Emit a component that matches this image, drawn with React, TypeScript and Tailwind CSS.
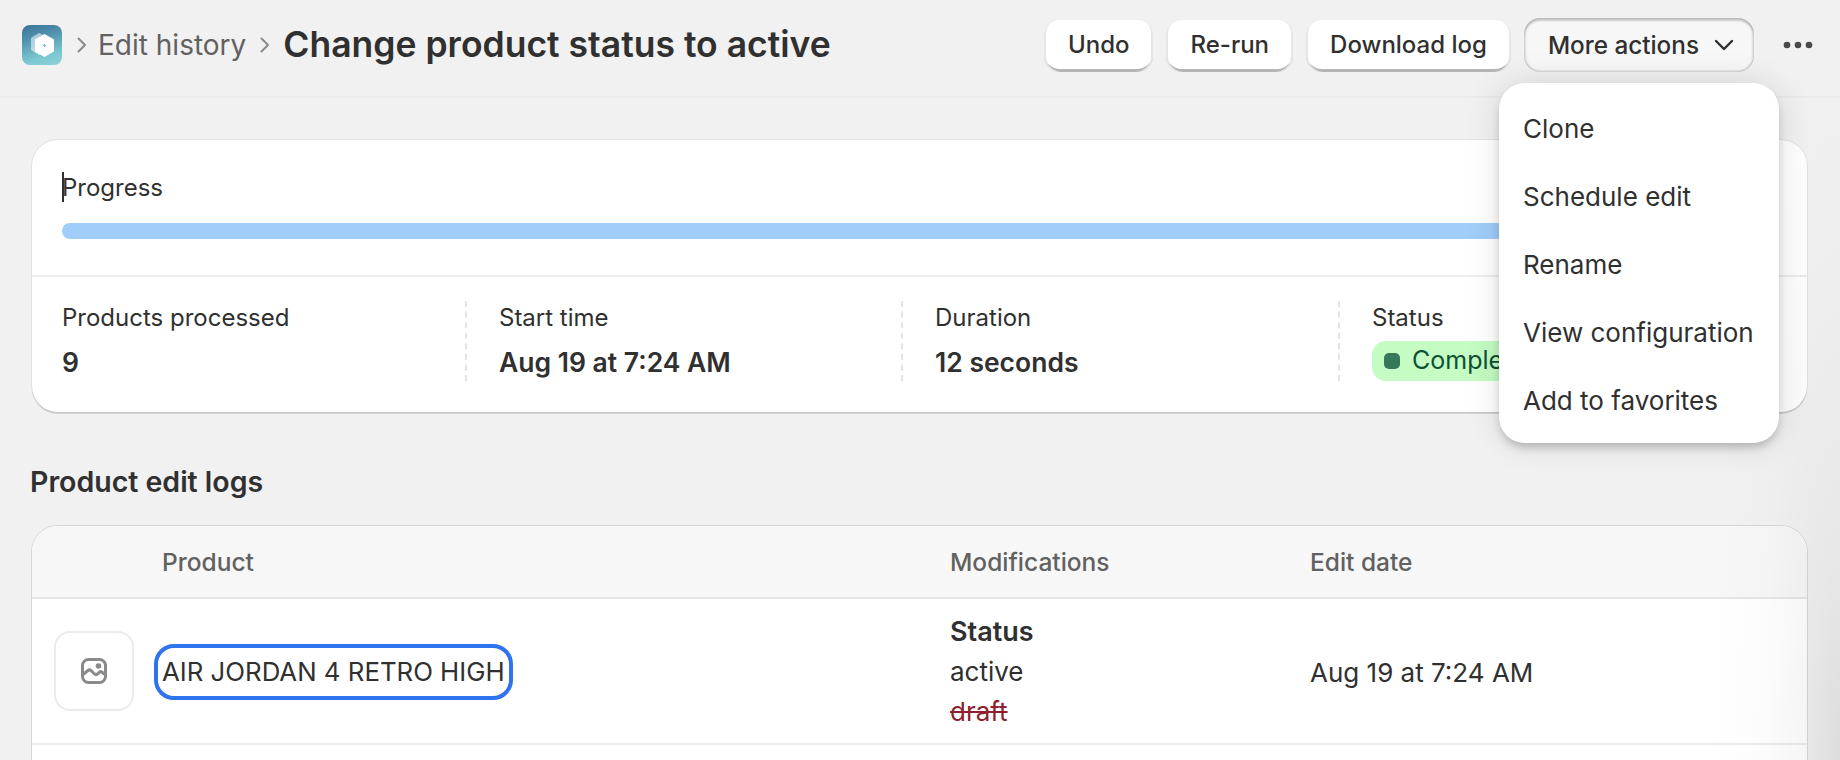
import React from "react";

function Chevron() {
  return (
    <svg width="10" height="16" viewBox="0 0 10 16" fill="none" className="shrink-0">
      <path d="M1.5 1.5 8 8l-6.500 6.500" stroke="#8a8a8a" strokeWidth="2" strokeLinecap="round" strokeLinejoin="round" />
    </svg>
  );
}

function Logo() {
  return (
    <div className="w-[40px] h-[40px] rounded-[8px] shrink-0 bg-[linear-gradient(165deg,#3b7398_0%,#4f8fab_30%,#7cc8d2_75%,#8fd2d6_100%)] flex items-center justify-center">
      <svg width="40" height="40" viewBox="0 0 40 40">
        <path d="M17 8l8 4v16l-8 2-8-5V13z" fill="#ffffff" fillOpacity="0.55" />
        <path d="M22.500 9l9.500 5.500v12L22.500 32 13 26.500v-12z" fill="#ffffff" />
        <path d="M22.500 19v3M21 20.500h3" stroke="#6fc0cc" strokeWidth="1" />
      </svg>
    </div>
  );
}

function ImageIcon() {
  return (
    <svg width="28" height="28" viewBox="0 0 28 28" fill="none">
      <rect x="2.500" y="2.500" width="23" height="23" rx="6" stroke="#8a8a8a" strokeWidth="3" />
      <circle cx="18.500" cy="9" r="2.800" fill="#8a8a8a" />
      <path d="M3 17.500 8 13.500c1-.8 2-.8 3 0l3.500 3.500c1 .9 1.900.9 2.800.1l2-1.800c.9-.8 1.900-.8 2.800 0L25 17.500" stroke="#8a8a8a" strokeWidth="3" />
    </svg>
  );
}

function Btn({ label }: { label: string }) {
  return (
    <button className="h-[54px] px-[24px] rounded-[16px] bg-white text-[24px] leading-[40px] font-[550] text-[#303030] shadow-[inset_0_2px_0_#f0f0f0,inset_2px_0_0_#e6e6e6,inset_-2px_0_0_#e6e6e6,inset_0_-3px_0_#b5b5b5]">
      {label}
    </button>
  );
}

function Stat({ label, value }: { label: string; value: string }) {
  return (
    <div className="border-l-2 border-dashed border-[#e3e3e3] pl-[32px] h-[80px]">
      <div className="text-[24px] leading-[34px] text-[#303030]">{label}</div>
      <div className="text-[26.500px] leading-[40px] mt-[7px] font-semibold text-[#303030]">{value}</div>
    </div>
  );
}

export default function App() {
  const menu = ["Clone", "Schedule edit", "Rename", "View configuration", "Add to favorites"];
  return (
    <div className="relative w-[1840px] h-[760px] overflow-hidden bg-[#f1f1f1] font-['Inter',sans-serif] text-[#303030]">
      <header className="h-[98px] border-b-2 border-[#ebebeb] flex items-center pl-[22px] pr-[27px] pb-[6px]">
        <Logo />
        <div className="ml-[15px]"><Chevron /></div>
        <span className="ml-[11px] text-[28px] leading-[40px] text-[#616161]">Edit history</span>
        <div className="ml-[14px]"><Chevron /></div>
        <h1 className="ml-[13px] text-[35.500px] leading-[44px] font-semibold text-[#303030]">Change product status to active</h1>
        <div className="ml-auto flex items-center gap-[13px]">
          <Btn label="Undo" />
          <Btn label="Re-run" />
          <Btn label="Download log" />
          <button className="h-[54px] pl-[24px] pr-[20px] flex items-center gap-[15px] rounded-[16px] bg-[#f7f7f7] text-[24.300px] leading-[40px] font-[550] text-[#303030] shadow-[inset_0_3px_2px_rgba(26,26,26,0.2),inset_2px_0_2px_rgba(26,26,26,0.12),inset_-2px_0_2px_rgba(26,26,26,0.12),inset_0_-2px_0_#e6e6e6]">
            More actions
            <svg width="20" height="12" viewBox="0 0 20 12" fill="none">
              <path d="M2 2l8 8 8-8" stroke="#303030" strokeWidth="2.400" strokeLinecap="round" strokeLinejoin="round" />
            </svg>
          </button>
          <svg className="ml-[16px]" width="30" height="8" viewBox="0 0 30 8">
            <circle cx="4" cy="4" r="3.300" fill="#4a4a4a" />
            <circle cx="15" cy="4" r="3.300" fill="#4a4a4a" />
            <circle cx="26" cy="4" r="3.300" fill="#4a4a4a" />
          </svg>
        </div>
      </header>

      <main className="pl-[32px] pr-[33px] pt-[42px]">
        <section className="rounded-[26px] bg-white h-[272px] shadow-[0_0_0_1px_rgba(0,0,0,0.06),0_2px_0_rgba(26,26,26,0.14)]">
          <div className="px-[30px] pt-[28px] pb-[36px] border-b-2 border-[#ebebeb]">
            <div className="relative text-[24px] leading-[40px] text-[#303030]">
              Progress
              <span className="absolute left-0 top-[4px] w-[2px] h-[30px] bg-[#303030]" />
            </div>
            <div className="mt-[15px] h-[16px] rounded-full bg-[#a0cdf9]" />
          </div>
          <div className="pl-[30px] pr-[30px] pt-[24px] grid grid-cols-[403px_436px_437px_1fr]">
            <div className="h-[80px]">
              <div className="text-[24px] leading-[34px] text-[#303030]">Products processed</div>
              <div className="text-[26.500px] leading-[40px] mt-[7px] font-semibold text-[#303030]">9</div>
            </div>
            <Stat label="Start time" value="Aug 19 at 7:24 AM" />
            <Stat label="Duration" value="12 seconds" />
            <div className="border-l-2 border-dashed border-[#e3e3e3] pl-[32px] h-[80px]">
              <div className="text-[24px] leading-[34px] text-[#303030]">Status</div>
              <div className="mt-[6px] inline-flex h-[40px] items-center rounded-[14px] bg-[#c4fcc4] pl-[12px] pr-[16px] gap-[12px] text-[25px] text-[#0c5132]">
                <span className="w-[16px] h-[16px] rounded-[5px] bg-[#36785a]" />
                Completed
              </div>
            </div>
          </div>
        </section>

        <h2 className="mt-[50px] -ml-[2px] text-[28.500px] leading-[40px] font-semibold text-[#303030]">Product edit logs</h2>

        <section className="mt-[24px] rounded-t-[26px] bg-white h-[300px] shadow-[0_0_0_1px_rgba(0,0,0,0.1)] overflow-hidden">
          <div className="h-[73px] pt-[2px] bg-[#f7f7f7] border-b-2 border-[#e6e6e6] grid grid-cols-[130px_788px_360px_1fr] items-center text-[24.500px] font-[500] text-[#616161]">
            <div />
            <div>Product</div>
            <div>Modifications</div>
            <div>Edit date</div>
          </div>
          <div className="h-[146px] pt-[2px] border-b-2 border-[#ebebeb] grid grid-cols-[130px_788px_360px_1fr] items-center text-[26px] text-[#303030]">
            <div className="pl-[22px]">
              <div className="w-[80px] h-[80px] -mt-[2px] rounded-[16px] border-2 border-[#ebebeb] flex items-center justify-center">
                <ImageIcon />
              </div>
            </div>
            <div>
              <a className="inline-block -ml-[8px] h-[56px] px-[4px] border-[4px] border-[#2f73f0] rounded-[20px] text-[25.800px] leading-[48px] whitespace-nowrap">AIR JORDAN 4 RETRO HIGH</a>
            </div>
            <div className="leading-[40px]">
              <div className="font-semibold text-[27px]">Status</div>
              <div>active</div>
              <div className="line-through text-[#8e1f2f]">draft</div>
            </div>
            <div>Aug 19 at 7:24 AM</div>
          </div>
        </section>
      </main>

      <div className="absolute inset-0 pointer-events-none bg-[radial-gradient(ellipse_130px_800px_at_100%_100%,rgba(0,0,0,0.085)_0%,rgba(0,0,0,0.04)_25%,rgba(0,0,0,0.01)_60%,transparent_100%)]" />

      <div className="absolute left-[1499px] top-[83px] w-[280px] h-[360px] rounded-[26px] bg-white pt-[11px] shadow-[0_6px_10px_-2px_rgba(0,0,0,0.22),0_0_34px_rgba(0,0,0,0.12)]">
        {menu.map((m) => (
          <div key={m} className="h-[68px] flex items-center pl-[24px] text-[26px] text-[#303030]">{m}</div>
        ))}
      </div>
    </div>
  );
}
